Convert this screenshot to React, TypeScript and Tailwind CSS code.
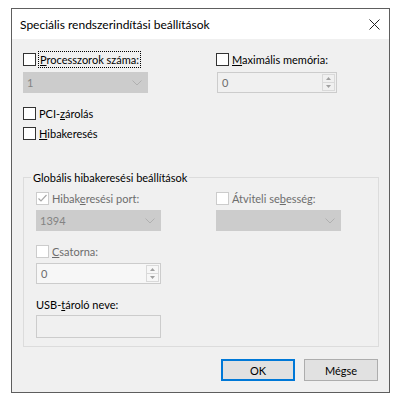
import React from 'react';

const font = { fontFamily: 'Lato, "Noto Sans", sans-serif' };

function CheckBox({ checked = false, disabled = false }: { checked?: boolean; disabled?: boolean }) {
  return (
    <span
      className={
        'flex h-[13px] w-[13px] shrink-0 items-center justify-center border ' +
        (disabled ? 'border-[#cccccc] bg-white' : 'border-[#333333] bg-white')
      }
    >
      {checked && (
        <svg width="11" height="11" viewBox="0 0 11 11">
          <polyline points="1.5,5.5 4,8 9.5,2" fill="none" stroke={disabled ? '#a8a8a8' : '#333'} strokeWidth="1.2" />
        </svg>
      )}
    </span>
  );
}

function Chevron() {
  return (
    <svg width="10" height="6" viewBox="0 0 10 6">
      <polyline points="0.5,0.5 5,5 9.5,0.5" fill="none" stroke="#b0b0b0" strokeWidth="1" />
    </svg>
  );
}

function Select({ value }: { value?: string }) {
  return (
    <div className="flex h-[21px] w-[125px] items-center justify-between bg-[#cccccc] pl-[4px] pr-[6px] text-[#838383]">
      <span>{value}</span>
      <Chevron />
    </div>
  );
}

function Spin({ value, bg }: { value: string; bg: string }) {
  return (
    <div className={'flex h-[21px] items-stretch border border-[#cccccc] ' + bg}>
      <span className="flex flex-1 items-center pl-[4px] text-[#6d6d6d]">{value}</span>
      <div className="my-[1px] mr-[1px] flex w-[13px] flex-col border border-[#d9d9d9]">
        <div className="flex flex-1 items-center justify-center border-b border-[#d9d9d9]">
          <svg width="5" height="3" viewBox="0 0 5 3">
            <polygon points="0,3 2.5,0 5,3" fill="#a0a0a0" />
          </svg>
        </div>
        <div className="flex flex-1 items-center justify-center">
          <svg width="5" height="3" viewBox="0 0 5 3">
            <polygon points="0,0 2.5,3 5,0" fill="#a0a0a0" />
          </svg>
        </div>
      </div>
    </div>
  );
}

function Row({ children }: { children: React.ReactNode }) {
  return <div className="flex h-[15px] items-center gap-[2px]">{children}</div>;
}

export default function App() {
  return (
    <div className="min-h-[404px] bg-white pl-[11px] pt-[8px] text-[11px] leading-[15px] text-black" style={font}>
      <div className="flex h-[385px] w-[379px] flex-col border border-[#5e5e5e]">
        <div className="flex h-[30px] items-center justify-between bg-white pl-[8px] pr-[9px]">
          <span className="text-[12px]">Speciális rendszerindítási beállítások</span>
          <svg width="11" height="11" viewBox="0 0 11 11">
            <path d="M0.5 0.5 L10.5 10.5 M10.5 0.5 L0.5 10.5" stroke="#222" strokeWidth="1" />
          </svg>
        </div>

        <div className="flex flex-1 flex-col bg-[#f0f0f0] pl-[11px] pt-[13px]">
          <div className="flex">
            <div className="w-[193px]">
              <Row>
                <CheckBox />
                <span className="border border-dotted border-black px-[1px]">
                  <span className="underline">P</span>rocesszorok száma:
                </span>
              </Row>
              <div className="mt-[5px]">
                <Select value="1" />
              </div>
            </div>
            <div>
              <Row>
                <CheckBox />
                <span className="pl-[1px]">
                  <span className="underline">M</span>aximális memória:
                </span>
              </Row>
              <div className="ml-[1px] mt-[5px] w-[120px]">
                <Spin value="0" bg="bg-[#f0f0f0]" />
              </div>
            </div>
          </div>

          <div className="mt-[13px]">
            <Row>
              <CheckBox />
              <span className="pl-[1px]">
                PCI-<span className="underline">z</span>árolás
              </span>
            </Row>
          </div>
          <div className="mt-[5px]">
            <Row>
              <CheckBox />
              <span className="pl-[1px]">
                <span className="underline">H</span>ibakeresés
              </span>
            </Row>
          </div>

          <div className="relative mt-[36px] h-[170px] w-[356px] border border-[#dcdcdc] pl-[12px] pt-[13px]">
            <span className="absolute -top-[8px] left-[7px] bg-[#f0f0f0] px-[2px]">Globális hibakeresési beállítások</span>
            <div className="flex">
              <div className="w-[180px]">
                <Row>
                  <CheckBox checked disabled />
                  <span className="pl-[1px] text-[#6d6d6d]">
                    Hibak<span className="underline">e</span>resési port:
                  </span>
                </Row>
                <div className="mt-[4px]">
                  <Select value="1394" />
                </div>
              </div>
              <div>
                <Row>
                  <CheckBox disabled />
                  <span className="pl-[1px] text-[#6d6d6d]">
                    Átviteli se<span className="underline">b</span>esség:
                  </span>
                </Row>
                <div className="mt-[4px]">
                  <Select />
                </div>
              </div>
            </div>

            <div className="mt-[13px]">
              <Row>
                <CheckBox disabled />
                <span className="pl-[1px] text-[#6d6d6d]">
                  <span className="underline">C</span>satorna:
                </span>
              </Row>
            </div>
            <div className="mt-[4px] w-[125px]">
              <Spin value="0" bg="bg-[#f7f7f7]" />
            </div>

            <div className="mt-[13px] h-[15px]">
              USB-<span className="underline">t</span>ároló neve:
            </div>
            <div className="mt-[3px] h-[23px] w-[125px] border border-[#cccccc] bg-[#f0f0f0]" />
          </div>

          <div className="mt-[12px] flex w-[355px] justify-end gap-[9px]">
            <button className="flex h-[22px] w-[74px] items-center justify-center border-2 border-[#0078d7] bg-[#e1e1e1]">
              OK
            </button>
            <button className="flex h-[22px] w-[74px] items-center justify-center border border-[#adadad] bg-[#e1e1e1]">
              Mégse
            </button>
          </div>
        </div>
      </div>
    </div>
  );
}
